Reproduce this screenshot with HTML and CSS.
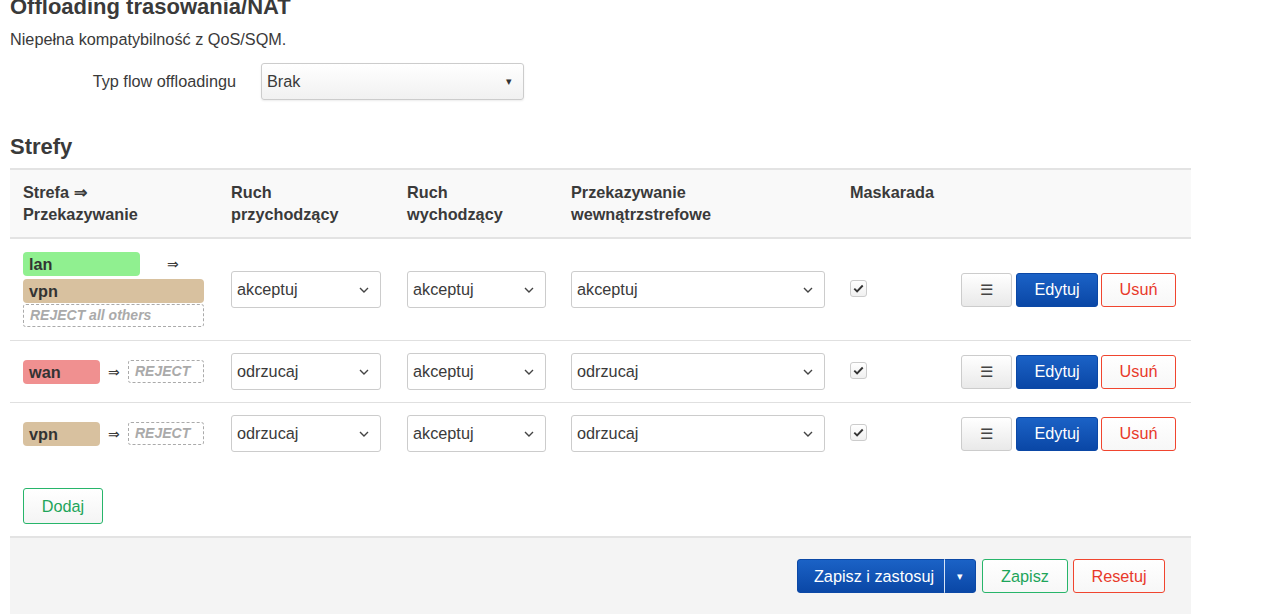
FILE: index.html
```html
<!DOCTYPE html>
<html lang="pl">
<head>
    <meta charset="UTF-8">
    <meta name="viewport" content="width=device-width, initial-scale=1.0">
    <title>Zapora - Ustawienia strefy</title>
    <link rel="stylesheet" href="styles.css">
</head>
<body>
    <div class="page">
        <h2 class="section-title first">Offloading trasowania/NAT</h2>
        <p class="section-descr">Niepełna kompatybilność z QoS/SQM.</p>
        <div class="form-row">
            <label class="form-label">Typ flow offloadingu</label>
            <div class="select select-main">
                <span>Brak</span>
                <span class="caret">&#9662;</span>
            </div>
        </div>

        <h2 class="section-title">Strefy</h2>
        <table class="zones">
            <colgroup>
                <col style="width:208px">
                <col style="width:176px">
                <col style="width:164px">
                <col style="width:279px">
                <col style="width:111px">
                <col>
            </colgroup>
            <thead>
                <tr>
                    <th>Strefa &rArr;<br>Przekazywanie</th>
                    <th>Ruch<br>przychodzący</th>
                    <th>Ruch<br>wychodzący</th>
                    <th>Przekazywanie<br>wewnątrzstrefowe</th>
                    <th>Maskarada</th>
                    <th></th>
                </tr>
            </thead>
            <tbody>
                <tr>
                    <td>
                        <div class="fwd-line">
                            <span class="zone zone-lan wide">lan</span>
                            <span class="arrow arrow-far">&rArr;</span>
                        </div>
                        <span class="zone zone-vpn full">vpn</span>
                        <span class="reject full">REJECT all others</span>
                    </td>
                    <td><div class="select w150"><span>akceptuj</span><svg class="chev" viewBox="0 0 10 6"><path d="M1 1l4 4 4-4"/></svg></div></td>
                    <td><div class="select w139"><span>akceptuj</span><svg class="chev" viewBox="0 0 10 6"><path d="M1 1l4 4 4-4"/></svg></div></td>
                    <td><div class="select w254"><span>akceptuj</span><svg class="chev" viewBox="0 0 10 6"><path d="M1 1l4 4 4-4"/></svg></div></td>
                    <td><span class="check"><svg viewBox="0 0 16 16"><path d="M3.5 8.2l3 3 6-6.4"/></svg></span></td>
                    <td class="actions">
                        <button class="btn btn-menu">&#9776;</button><button class="btn btn-edit">Edytuj</button><button class="btn btn-remove">Usuń</button>
                    </td>
                </tr>
                <tr>
                    <td>
                        <div class="fwd-line">
                            <span class="zone zone-wan">wan</span>
                            <span class="arrow">&rArr;</span>
                            <span class="reject">REJECT</span>
                        </div>
                    </td>
                    <td><div class="select w150"><span>odrzucaj</span><svg class="chev" viewBox="0 0 10 6"><path d="M1 1l4 4 4-4"/></svg></div></td>
                    <td><div class="select w139"><span>akceptuj</span><svg class="chev" viewBox="0 0 10 6"><path d="M1 1l4 4 4-4"/></svg></div></td>
                    <td><div class="select w254"><span>odrzucaj</span><svg class="chev" viewBox="0 0 10 6"><path d="M1 1l4 4 4-4"/></svg></div></td>
                    <td><span class="check"><svg viewBox="0 0 16 16"><path d="M3.5 8.2l3 3 6-6.4"/></svg></span></td>
                    <td class="actions">
                        <button class="btn btn-menu">&#9776;</button><button class="btn btn-edit">Edytuj</button><button class="btn btn-remove">Usuń</button>
                    </td>
                </tr>
                <tr>
                    <td>
                        <div class="fwd-line">
                            <span class="zone zone-vpn">vpn</span>
                            <span class="arrow">&rArr;</span>
                            <span class="reject">REJECT</span>
                        </div>
                    </td>
                    <td><div class="select w150"><span>odrzucaj</span><svg class="chev" viewBox="0 0 10 6"><path d="M1 1l4 4 4-4"/></svg></div></td>
                    <td><div class="select w139"><span>akceptuj</span><svg class="chev" viewBox="0 0 10 6"><path d="M1 1l4 4 4-4"/></svg></div></td>
                    <td><div class="select w254"><span>odrzucaj</span><svg class="chev" viewBox="0 0 10 6"><path d="M1 1l4 4 4-4"/></svg></div></td>
                    <td><span class="check"><svg viewBox="0 0 16 16"><path d="M3.5 8.2l3 3 6-6.4"/></svg></span></td>
                    <td class="actions">
                        <button class="btn btn-menu">&#9776;</button><button class="btn btn-edit">Edytuj</button><button class="btn btn-remove">Usuń</button>
                    </td>
                </tr>
            </tbody>
        </table>

        <div class="add-row">
            <button class="btn btn-add">Dodaj</button>
        </div>

        <div class="page-actions">
            <div class="split">
                <button class="btn btn-apply">Zapisz i zastosuj</button><button class="btn btn-apply-drop">&#9662;</button>
            </div>
            <button class="btn btn-save">Zapisz</button>
            <button class="btn btn-reset">Resetuj</button>
        </div>
    </div>
</body>
</html>
```

FILE: styles.css
```css
body {
    font-family: "Liberation Sans", Arial, sans-serif;
    font-size: 16.25px;
    color: #3a3a3a;
    margin: 0;
    padding: 0;
    background-color: white;
    overflow: hidden;
}

.page {
    width: 1181px;
    padding-left: 10px;
}

.section-title {
    font-size: 22px;
    line-height: 24px;
    font-weight: bold;
    color: #3a3a3a;
    margin: 35px 0 0;
}

.section-title.first {
    margin-top: -5px;
}

.section-descr {
    margin: 9px 0 0;
    line-height: 22px;
}

.form-row {
    display: flex;
    align-items: center;
    margin-top: 13px;
}

.form-label {
    width: 226px;
    text-align: right;
    margin-right: 25px;
}

.select {
    box-sizing: border-box;
    height: 37px;
    border: 1px solid #ccc;
    border-radius: 3px;
    background-color: white;
    display: flex;
    align-items: center;
    justify-content: space-between;
    padding: 0 11px 0 5px;
}

.select-main {
    width: 263px;
    background: linear-gradient(#fff, #f1f1f1);
    box-shadow: 0 1px 2px rgba(0,0,0,0.08);
}

.caret {
    font-size: 11px;
    color: #333;
}

.w150 { width: 150px; }
.w139 { width: 139px; }
.w254 { width: 254px; }

.chev {
    width: 10px;
    height: 6px;
    fill: none;
    stroke: #444;
    stroke-width: 1.4;
}

.zones {
    width: 1181px;
    border-collapse: collapse;
    table-layout: fixed;
    margin-top: 9px;
    border-top: 2px solid #e3e3e3;
}

.zones th {
    background-color: #f9f9f9;
    text-align: left;
    vertical-align: top;
    font-weight: bold;
    line-height: 22px;
    padding: 11px 13px 12px;
    height: 44px;
    border-bottom: 2px solid #e3e3e3;
}

.zones td {
    padding: 12px 13px;
    vertical-align: middle;
    border-top: 1px solid #e0e0e0;
}

.zones tbody tr:first-child td {
    border-top: none;
    padding-top: 13px;
    padding-bottom: 13px;
}

.fwd-line {
    display: flex;
    align-items: center;
}

.zone {
    box-sizing: border-box;
    display: block;
    height: 24px;
    line-height: 24px;
    padding-left: 6px;
    border-radius: 4px;
    font-weight: bold;
    color: #333;
    width: 77px;
}

.zone.wide { width: 117px; }
.zone.full { width: 181px; margin-top: 3px; }

.zone-lan { background-color: #90f090; }
.zone-wan { background-color: #f09090; }
.zone-vpn { background-color: #d8c19f; }

.arrow {
    font-size: 14px;
    margin: 0 8px;
}

.arrow-far {
    margin-left: 27px;
}

.reject {
    box-sizing: border-box;
    display: block;
    width: 76px;
    height: 23px;
    line-height: 21px;
    border: 1px dashed #aaa;
    border-radius: 3px;
    padding-left: 6px;
    font-size: 14px;
    font-style: italic;
    font-weight: bold;
    color: #aaa;
}

.reject.full {
    width: 181px;
    margin-top: 1px;
}

.check {
    display: inline-block;
    box-sizing: border-box;
    width: 17px;
    height: 17px;
    border: 1px solid #ccc;
    border-radius: 3px;
    background: linear-gradient(#fff, #f0f0f0);
    vertical-align: middle;
    margin-top: -4px;
}

.check svg {
    display: block;
    width: 15px;
    height: 15px;
    fill: none;
    stroke: #333;
    stroke-width: 2;
}

.zones td.actions {
    text-align: right;
    white-space: nowrap;
    padding-right: 15px;
}

.btn {
    font-family: "Liberation Sans", Arial, sans-serif;
    font-size: 16.25px;
    height: 34px;
    border-radius: 3px;
    cursor: pointer;
    vertical-align: middle;
    padding: 0 12px;
}

.btn-menu {
    width: 51px;
    border: 1px solid #ccc;
    background: linear-gradient(#fff, #e9e9e9);
    color: #444;
    font-size: 15px;
}

.btn-edit {
    width: 82px;
    margin-left: 4px;
    border: 1px solid #0b48a6;
    background: linear-gradient(#1b62c6, #0a47a6);
    color: white;
}

.btn-remove {
    width: 75px;
    margin-left: 3px;
    border: 1px solid #f0452f;
    background: linear-gradient(#fff, #f7f7f7);
    color: #e8392a;
}

.add-row {
    padding: 24px 13px 12px;
}

.btn-add {
    width: 80px;
    height: 36px;
    border: 1px solid #27b56a;
    background: linear-gradient(#fff, #f4f4f4);
    color: #1ea55a;
}

.page-actions {
    background-color: #f4f4f4;
    border-top: 2px solid #e3e3e3;
    padding: 21px 26px 30px;
    text-align: right;
    font-size: 0;
}

.split {
    display: inline-flex;
    vertical-align: middle;
    border-radius: 3px;
    overflow: hidden;
}

.btn-apply {
    width: 147px;
    border: 1px solid #0b48a6;
    border-right: none;
    border-radius: 3px 0 0 3px;
    background: linear-gradient(#1b62c6, #0a47a6);
    color: white;
    padding: 0 0 0 6px;
}

.btn-apply-drop {
    width: 32px;
    border: 1px solid #0b48a6;
    border-left: 1px solid #d8e4f6;
    border-radius: 0 3px 3px 0;
    background: linear-gradient(#1b62c6, #0a47a6);
    color: white;
    font-size: 11px;
    padding: 0;
}

.btn-save {
    width: 86px;
    margin-left: 6px;
    border: 1px solid #27b56a;
    background: linear-gradient(#fff, #f7f7f7);
    color: #1ea55a;
}

.btn-reset {
    width: 92px;
    margin-left: 5px;
    border: 1px solid #f0452f;
    background: linear-gradient(#fff, #f7f7f7);
    color: #e8392a;
}
```
